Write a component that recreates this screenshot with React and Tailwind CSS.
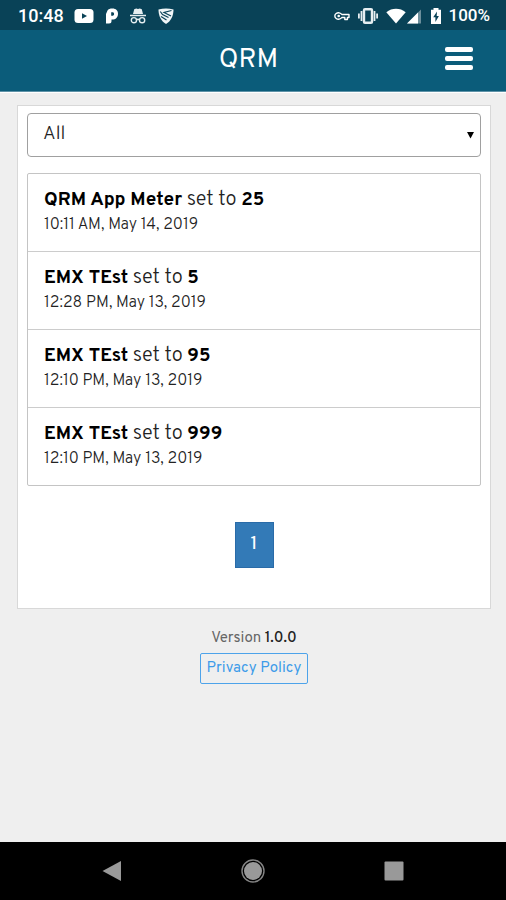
const readings = [
  { id: 1, name: "QRM App Meter", value: "25", time: "10:11 AM, May 14, 2019" },
  { id: 2, name: "EMX TEst", value: "5", time: "12:28 PM, May 13, 2019" },
  { id: 3, name: "EMX TEst", value: "95", time: "12:10 PM, May 13, 2019" },
  { id: 4, name: "EMX TEst", value: "999", time: "12:10 PM, May 13, 2019" },
];

function YouTubeIcon() {
  return (
    <svg className="h-4 w-5" viewBox="0 0 20 16" aria-hidden="true">
      <rect x="0.5" y="1" width="19" height="14" rx="3.5" fill="#fff" />
      <path d="M8 5.2v5.6L13 8z" fill="#094257" />
    </svg>
  );
}

function PandoraIcon() {
  return (
    <svg className="h-4 w-3" viewBox="0 0 12 16" aria-hidden="true">
      <path
        fill="#fff"
        fillRule="evenodd"
        d="M1.500 2.500C2.500 1 4 .5 6.500.5 10 .5 12 2.600 12 5.700 12 9.200 9.800 11.500 6.300 11.500H5.500V13c0 1.700-.8 2.500-2.500 2.500H0V6zM5.200 4.300v3.400h1c1.200 0 1.900-.7 1.900-1.800S7.400 4.300 6.500 4.300z"
      />
    </svg>
  );
}

function IncognitoIcon() {
  return (
    <svg className="h-4 w-4" viewBox="0 0 16 16" aria-hidden="true">
      <path d="M4.200 1.200 6.200.5 8 1l1.800-.5 2 .7L13 6H3zM0 6.700h16v1.500H0z" fill="#e6eef1" />
      <g fill="none" stroke="#e6eef1" strokeWidth="1.400">
        <circle cx="3.900" cy="12.200" r="2.600" />
        <circle cx="12.100" cy="12.200" r="2.600" />
        <path d="M6.500 11.800q1.500-1 3 0" />
      </g>
    </svg>
  );
}

function ShieldIcon() {
  return (
    <svg className="h-4 w-4" viewBox="0 0 16 16" aria-hidden="true">
      <path d="M.5 1.500Q8-.6 15.500 1.500C15.500 8 13 13 8 16 3 13 .5 8 .5 1.500z" fill="#f1f6f8" />
      <path
        d="M13.500 2.500 6 4.500l7 3.500M2.300 3.500 4.500 6.500 10.500 9.500M3 8.500 8.500 12"
        fill="none"
        stroke="#094257"
        strokeWidth="1.200"
      />
    </svg>
  );
}

function KeyIcon() {
  return (
    <svg className="h-4 w-4" viewBox="0 0 16 16" aria-hidden="true">
      <path
        d="M7.800 6.500H15v3h-1.600v2h-2.600v-2h-3A3.700 3.200 0 1 1 7.800 6.500z"
        fill="none"
        stroke="#fff"
        strokeWidth="1.400"
        strokeLinejoin="round"
      />
      <circle cx="4.700" cy="8" r="1.300" fill="#fff" />
    </svg>
  );
}

function VibrateIcon() {
  return (
    <svg className="h-4 w-5" viewBox="0 0 20 16" aria-hidden="true">
      <rect x="6" y="1.200" width="8" height="13.600" rx="1" fill="none" stroke="#e6eef1" strokeWidth="2.400" />
      <path d="M3.500 3v10M16.500 3v10M.9 5.500v5M19.100 5.500v5" stroke="#e6eef1" strokeWidth="1.800" />
    </svg>
  );
}

function WifiIcon() {
  return (
    <svg className="h-4 w-5" viewBox="0 0 20 16" aria-hidden="true">
      <path d="M.3 4.200C6-.4 14-.4 19.700 4.200L10 15.500z" fill="#fff" />
    </svg>
  );
}

function SignalIcon() {
  return (
    <svg className="h-4 w-4" viewBox="0 0 16 16" aria-hidden="true">
      <path d="M1 15.500 15 1.500v14z" fill="#6d8f9c" />
      <path d="M1 15.500 12 4.500v11z" fill="#fff" />
    </svg>
  );
}

function BatteryIcon() {
  return (
    <svg className="h-4 w-3" viewBox="0 0 12 16" aria-hidden="true">
      <path d="M3.500 0h5v1.700H11V16H1V1.700h2.500z" fill="#fff" />
      <path d="M7 3.500 3.200 9.300h2.200V14l3.500-6H6.700z" fill="#094257" />
    </svg>
  );
}

function StatusBar() {
  return (
    <div className="flex h-[30px] items-center justify-between bg-[#094257] pt-px pr-4 pl-[18px] font-[Roboto,sans-serif] font-medium text-white">
      <div className="flex items-center">
        <span className="mr-[10px] text-lg">10:48</span>
        <div className="flex items-center gap-3">
          <YouTubeIcon />
          <PandoraIcon />
          <IncognitoIcon />
          <ShieldIcon />
        </div>
      </div>
      <div className="flex items-center">
        <div className="mr-[6px] flex items-center gap-2">
          <KeyIcon />
          <VibrateIcon />
          <div className="flex">
            <WifiIcon />
            <SignalIcon />
          </div>
          <BatteryIcon />
        </div>
        <span className="text-[17px]">100%</span>
      </div>
    </div>
  );
}

function Header() {
  return (
    <header className="grid h-[62px] grid-cols-[1fr_auto_1fr] items-center border-b border-[#5f93a8] bg-[#0b5c7a] pr-[33px] pl-6 text-white">
      <span />
      <h1 className="pb-[2px] font-[Overpass,Roboto,sans-serif] text-[27px] leading-8">QRM</h1>
      <button type="button" aria-label="Menu" className="mb-1 flex w-7 flex-col gap-1 justify-self-end">
        <span className="h-[5px] w-full rounded-xs bg-white" />
        <span className="h-[5px] w-full rounded-xs bg-white" />
        <span className="h-[5px] w-full rounded-xs bg-white" />
      </button>
    </header>
  );
}

function NavigationBar() {
  return (
    <nav className="grid h-[58px] grid-cols-3 items-center bg-black px-[42px]">
      <button type="button" aria-label="Back" className="justify-self-center">
        <svg className="size-6" viewBox="0 0 24 24" aria-hidden="true">
          <path d="M2.500 12 21 2v20z" fill="#999" />
        </svg>
      </button>
      <button type="button" aria-label="Home" className="justify-self-center">
        <svg className="size-6" viewBox="0 0 24 24" aria-hidden="true">
          <circle cx="12" cy="12" r="11" fill="none" stroke="#858585" strokeWidth="1.400" />
          <circle cx="12" cy="12" r="9" fill="#999" />
        </svg>
      </button>
      <button type="button" aria-label="Recent apps" className="justify-self-center">
        <svg className="size-6" viewBox="0 0 24 24" aria-hidden="true">
          <rect x="2.500" y="2.500" width="19" height="19" rx="1" fill="#999" />
        </svg>
      </button>
    </nav>
  );
}

export default function App() {
  return (
    <div className="flex min-h-screen flex-col bg-[#efefef] font-[Overpass,Roboto,sans-serif] text-[#222]">
      <StatusBar />
      <Header />
      <main className="flex-1 border-t border-white pt-3 pr-[15px] pl-[17px]">
        <section className="border border-[#d8d8d8] bg-white px-[9px] pt-[7px] pb-10">
          <div className="relative">
            <select
              aria-label="Meter"
              className="block h-11 w-full appearance-none rounded-sm border border-[#a0a0a0] bg-white px-[15px] pb-px text-[19px] font-light text-[#222]"
            >
              <option>All</option>
            </select>
            <svg
              className="pointer-events-none absolute top-[18px] right-[7px] h-2 w-[7px]"
              viewBox="0 0 7 8"
              aria-hidden="true"
            >
              <path d="M0 1h7L3.500 7.500z" fill="#000" />
            </svg>
          </div>

          <ul className="mt-4 divide-y divide-[#ccc] rounded-xs border border-[#c4c4c4]">
            {readings.map((reading) => (
              <li key={reading.id} className="px-4 pt-[13px] pb-[15px]">
                <p className="text-xl leading-[27px] font-light text-[#222]">
                  <b className="text-[19px] font-bold text-black">{reading.name}</b> set to{" "}
                  <b className="text-[19px] font-bold text-black">{reading.value}</b>
                </p>
                <p className="text-base leading-[22px] font-light text-[#222]">{reading.time}</p>
              </li>
            ))}
          </ul>

          <div className="mt-9 flex justify-center">
            <button
              type="button"
              aria-current="page"
              className="h-[46px] w-[39px] border border-[#2a6ba8] bg-[#337ab7] text-lg font-medium text-white"
            >
              1
            </button>
          </div>
        </section>

        <footer className="flex flex-col items-center gap-[3px] pt-[19px]">
          <p className="text-[15px] leading-[22px] text-[#666]">
            Version <span className="font-medium text-[#222]">1.0.0</span>
          </p>
          <a
            href="#privacy"
            className="rounded-xs border border-[#4da3ea] px-[6px] pt-1 pb-[3px] text-[15px] leading-[22px] text-[#3d9be9]"
          >
            Privacy Policy
          </a>
        </footer>
      </main>
      <NavigationBar />
    </div>
  );
}
